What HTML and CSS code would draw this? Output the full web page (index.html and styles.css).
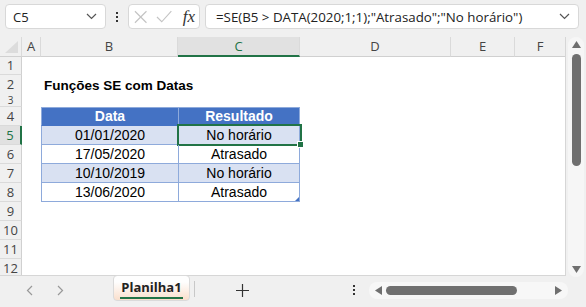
FILE: index.html
```html
<!DOCTYPE html>
<html lang="pt">
<head>
    <meta charset="UTF-8">
    <title>Funções SE com Datas</title>
    <link rel="stylesheet" href="styles.css">
</head>
<body>
    <div class="toolbar">
        <div class="namebox">
            <span>C5</span>
            <svg class="chev" width="11" height="7" viewBox="0 0 11 7"><path d="M1 1l4.5 4.5L10 1" fill="none" stroke="#555" stroke-width="1.2"/></svg>
        </div>
        <div class="vdots"><i></i><i></i><i></i></div>
        <div class="fxbox">
            <svg width="14" height="14" viewBox="0 0 14 14"><path d="M1 1l12 12M13 1L1 13" stroke="#c4c4c4" stroke-width="1.2"/></svg>
            <svg width="17" height="13" viewBox="0 0 17 13"><path d="M1 7l5 5L16 1" fill="none" stroke="#c4c4c4" stroke-width="1.2"/></svg>
            <span class="fx">fx</span>
        </div>
        <div class="formula">
            <span>=SE(B5 &gt; DATA(2020;1;1);"Atrasado";"No horário")</span>
            <svg class="chev" width="11" height="7" viewBox="0 0 11 7"><path d="M1 1l4.5 4.5L10 1" fill="none" stroke="#555" stroke-width="1.2"/></svg>
        </div>
    </div>

    <div class="sheet">
        <div class="grid">
            <div class="colheads">
                <div class="corner"></div>
                <div>A</div>
                <div>B</div>
                <div class="sel">C</div>
                <div>D</div>
                <div>E</div>
                <div>F</div>
            </div>

            <div class="row"><div class="rh">1</div></div>
            <div class="row r2"><div class="rh">2</div><div></div><div class="title">Funções SE com Datas</div></div>
            <div class="row r3"><div class="rh">3</div></div>
            <div class="row"><div class="rh">4</div><div></div><div class="cell th first">Data</div><div class="cell th">Resultado</div></div>
            <div class="row"><div class="rh sel">5</div><div></div><div class="cell band first">01/01/2020</div><div class="cell band active">No horário</div></div>
            <div class="row"><div class="rh">6</div><div></div><div class="cell first">17/05/2020</div><div class="cell">Atrasado</div></div>
            <div class="row"><div class="rh">7</div><div></div><div class="cell band first">10/10/2019</div><div class="cell band">No horário</div></div>
            <div class="row"><div class="rh">8</div><div></div><div class="cell first">13/06/2020</div><div class="cell last">Atrasado</div></div>
            <div class="row"><div class="rh">9</div></div>
            <div class="row"><div class="rh">10</div></div>
            <div class="row"><div class="rh">11</div></div>
            <div class="row"><div class="rh">12</div></div>
        </div>

        <div class="vscroll">
            <div class="track">
                <svg width="9" height="7" viewBox="0 0 9 7"><path d="M4.5 0L9 7H0z" fill="#6f6f6f"/></svg>
                <div class="vthumb"></div>
                <svg class="down" width="9" height="7" viewBox="0 0 9 7"><path d="M0 0h9L4.5 7z" fill="#6f6f6f"/></svg>
            </div>
        </div>
    </div>

    <div class="tabs">
        <div class="nav">
            <svg width="7" height="11" viewBox="0 0 7 11"><path d="M6 1L1.5 5.5 6 10" fill="none" stroke="#999" stroke-width="1.2"/></svg>
            <svg width="7" height="11" viewBox="0 0 7 11"><path d="M1 1l4.5 4.5L1 10" fill="none" stroke="#999" stroke-width="1.2"/></svg>
        </div>
        <div class="tab"><span>Planilha1</span></div>
        <div class="sep"></div>
        <div class="add">
            <svg width="13" height="13" viewBox="0 0 13 13"><path d="M6.5 0v13M0 6.5h13" stroke="#333" stroke-width="1.2"/></svg>
        </div>
        <div class="more"><i></i><i></i><i></i></div>
        <div class="hscroll">
            <svg width="7" height="9" viewBox="0 0 7 9"><path d="M0 4.5L7 0v9z" fill="#6f6f6f"/></svg>
            <div class="hthumb"></div>
            <svg width="7" height="9" viewBox="0 0 7 9"><path d="M7 4.5L0 9V0z" fill="#6f6f6f"/></svg>
        </div>
    </div>
</body>
</html>
```

FILE: styles.css
```css
body {
    margin: 0;
    width: 586px;
    height: 307px;
    overflow: hidden;
    background-color: #f0f0f0;
    font-family: "Open Sans", "Noto Sans", sans-serif;
    color: #222;
}

/* barra de fórmulas */
.toolbar {
    display: flex;
    align-items: flex-start;
    height: 37px;
    padding: 4px 7px 0 5px;
    box-sizing: border-box;
}

.namebox, .fxbox, .formula {
    height: 25px;
    box-sizing: border-box;
    background-color: #fff;
    border: 1px solid #d8d8d8;
    border-radius: 4px;
    display: flex;
    align-items: center;
}

.namebox {
    width: 101px;
    padding: 0 8px 0 7px;
    justify-content: space-between;
    font-size: 13px;
}

.vdots {
    width: 22px;
    height: 25px;
    display: flex;
    flex-direction: column;
    align-items: center;
    justify-content: center;
    gap: 2px;
}

.vdots i, .more i {
    display: block;
    width: 2px;
    height: 2px;
    background-color: #333;
}

.fxbox {
    width: 72px;
    padding: 0 4px 0 5px;
    gap: 9px;
}

.fx {
    font-family: "Liberation Serif", serif;
    font-style: italic;
    font-size: 17px;
    color: #333;
    margin-left: 1px;
}

.formula {
    width: 374px;
    margin-left: 5px;
    padding: 0 8px 0 10px;
    justify-content: space-between;
    font-size: 13.3px;
    white-space: nowrap;
}

/* planilha */
.sheet {
    display: flex;
    height: 239px;
}

.grid {
    width: 566px;
    height: 239px;
    overflow: hidden;
    background-color: #fff;
    border-right: 1px solid #d6d6d6;
    border-bottom: 1px solid #d6d6d6;
    box-sizing: border-box;
}

.colheads, .row {
    display: grid;
    grid-template-columns: 22px 19px 137px 122px 151px 64px 51px;
    height: 19px;
}

.colheads div {
    background-color: #f0f0f0;
    border-right: 1px solid #dadada;
    border-bottom: 1px solid #d0d0d0;
    box-sizing: border-box;
    text-align: center;
    font-size: 13px;
    line-height: 18px;
    color: #444;
}

.colheads .corner {
    position: relative;
}

.colheads .corner::after {
    content: "";
    position: absolute;
    right: 3px;
    bottom: 3px;
    border-left: 13px solid transparent;
    border-bottom: 12px solid #dcdcdc;
}

.colheads .sel {
    background-color: #e1e1e1;
    border-bottom: 2px solid #217346;
    color: #217346;
}

.rh {
    background-color: #f0f0f0;
    border-right: 1px solid #d0d0d0;
    border-bottom: 1px solid #dadada;
    box-sizing: border-box;
    text-align: center;
    font-size: 13px;
    line-height: 18px;
    color: #444;
    overflow: hidden;
}

.rh.sel {
    background-color: #e1e1e1;
    border-right: 2px solid #217346;
    color: #217346;
}

.r2 {
    height: 19px;
}

.r3 {
    height: 13px;
}

.r3 .rh {
    font-size: 10px;
    line-height: 12px;
}

.title {
    grid-column: 3 / 6;
    font-family: "Liberation Sans", Arial, sans-serif;
    font-weight: bold;
    font-size: 13.5px;
    line-height: 22px;
    padding-left: 3px;
    color: #000;
}

/* tabela */
.cell {
    font-family: "Liberation Sans", Arial, sans-serif;
    font-size: 14px;
    line-height: 18px;
    text-align: center;
    color: #000;
    border-left: 1px solid #8eaadb;
    border-right: 1px solid #8eaadb;
    border-bottom: 1px solid #8eaadb;
    box-sizing: border-box;
    position: relative;
}

.cell.first {
    border-right: none;
}

.th {
    background-color: #4472c4;
    color: #fff;
    font-weight: bold;
    border-top: 1px solid #8eaadb;
    border-bottom-color: #4472c4;
    line-height: 17px;
}

.band {
    background-color: #d9e1f2;
}

.active::after {
    content: "";
    position: absolute;
    top: -2px;
    left: -2px;
    right: -3px;
    bottom: -2px;
    border: 2px solid #217346;
}

.active::before {
    content: "";
    position: absolute;
    right: -5px;
    bottom: -4px;
    width: 5px;
    height: 5px;
    background-color: #217346;
    border: 1px solid #fff;
    z-index: 1;
}

.last::after {
    content: "";
    position: absolute;
    right: 0;
    bottom: 0;
    border-left: 4px solid transparent;
    border-bottom: 4px solid #4472c4;
}

/* barra de rolagem vertical */
.vscroll {
    width: 20px;
    padding: 0 2px;
    box-sizing: border-box;
}

.track {
    height: 240px;
    background-color: #f6f6f6;
    border-radius: 8px;
    display: flex;
    flex-direction: column;
    align-items: center;
    padding-top: 4px;
    box-sizing: border-box;
}

.vthumb {
    width: 9px;
    height: 112px;
    margin-top: 6px;
    background-color: #6f6f6f;
    border-radius: 5px;
}

.track .down {
    margin-top: auto;
    margin-bottom: 4px;
}

/* abas */
.tabs {
    display: flex;
    align-items: flex-start;
    height: 31px;
}

.nav {
    width: 113px;
    height: 28px;
    display: flex;
    align-items: center;
    gap: 24px;
    padding-left: 26px;
    box-sizing: border-box;
}

.tab {
    width: 77px;
    height: 26px;
    margin-top: -1px;
    box-sizing: border-box;
    border: 1px solid #dadada;
    border-radius: 4px;
    background: linear-gradient(#fefefe 25%, #fadfcc);
    text-align: center;
    font-weight: bold;
    font-size: 13px;
    line-height: 22px;
    color: #222;
}

.tab span {
    display: inline-block;
    border-bottom: 2px solid #217346;
    line-height: 19px;
    padding: 0 1px;
}

.sep {
    width: 1px;
    height: 16px;
    margin: 5px 0 0 4px;
    background-color: #c8c8c8;
}

.add {
    width: 94px;
    height: 28px;
    display: flex;
    align-items: center;
    justify-content: center;
}

.more {
    width: 30px;
    height: 28px;
    margin-left: 50px;
    display: flex;
    flex-direction: column;
    align-items: center;
    justify-content: center;
    gap: 2px;
}

.hscroll {
    width: 199px;
    height: 17px;
    margin-top: 6px;
    padding: 0 6px;
    box-sizing: border-box;
    background-color: #f7f7f7;
    border-radius: 8px;
    display: flex;
    align-items: center;
    justify-content: space-between;
}

.hthumb {
    width: 131px;
    height: 9px;
    margin-right: auto;
    margin-left: 4px;
    background-color: #707070;
    border-radius: 5px;
}
```
